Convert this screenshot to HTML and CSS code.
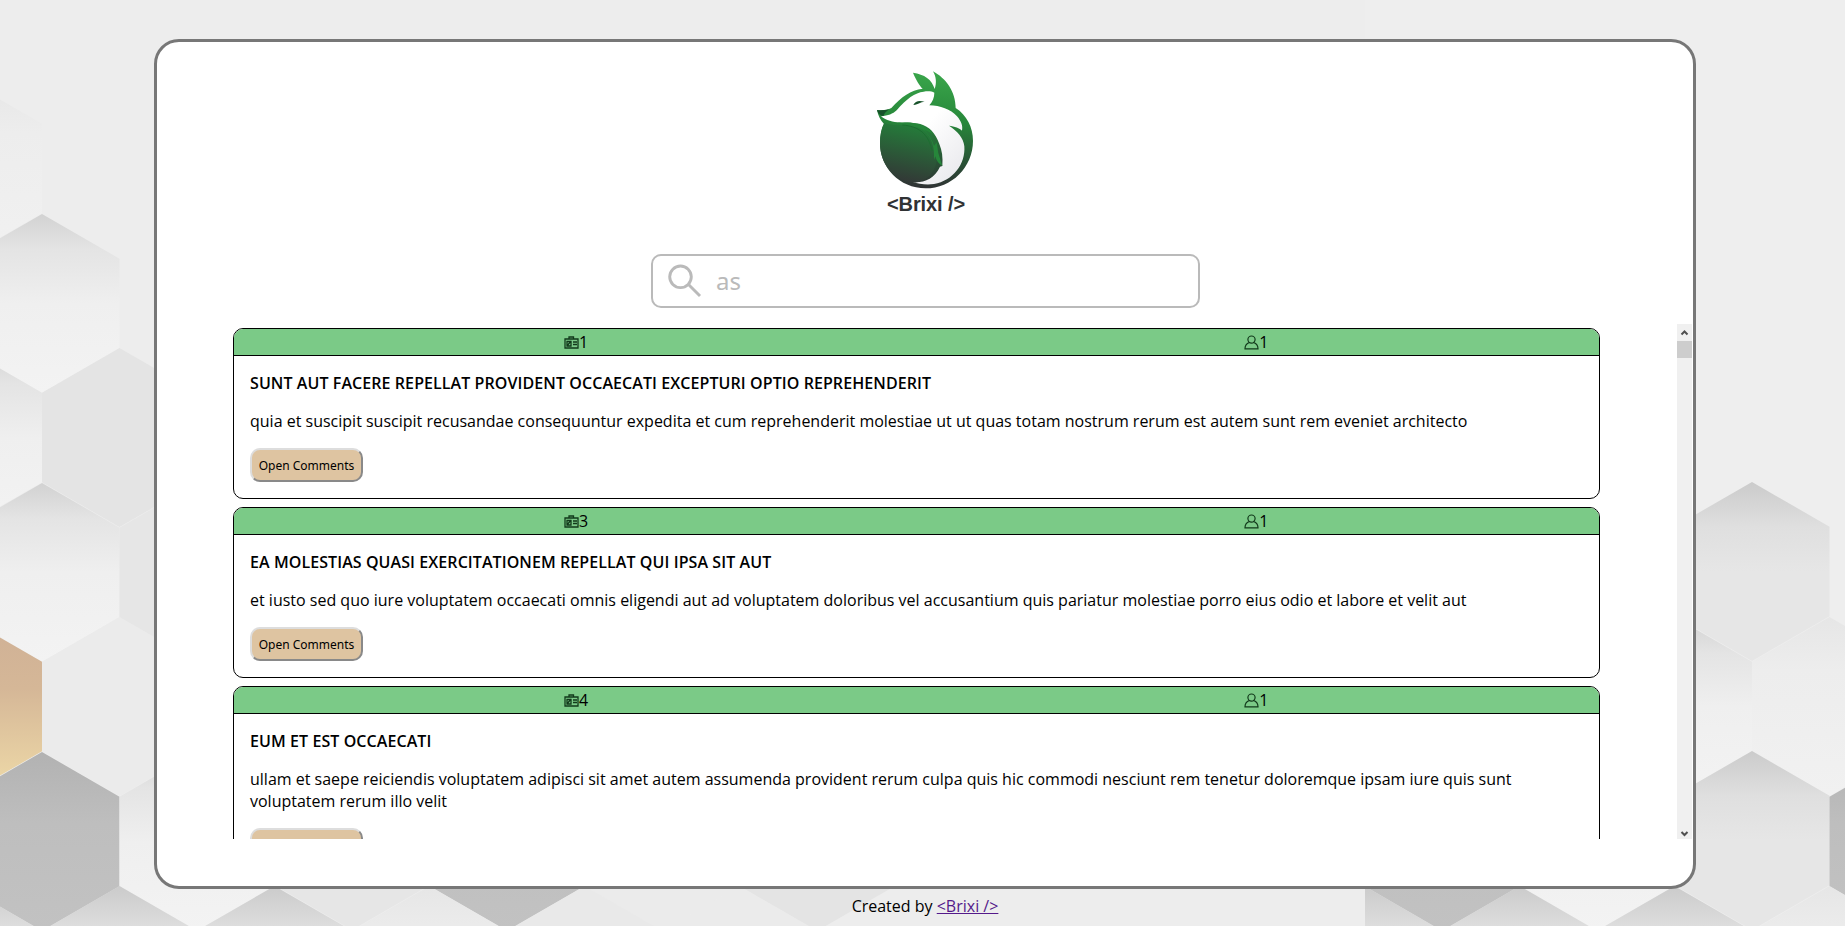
FILE: index.html
```html
<!DOCTYPE html>
<html lang="en">
<head>
<meta charset="utf-8">
<title>Brixi</title>
<link rel="stylesheet" href="styles.css">
</head>
<body>
<svg class="backdrop" viewBox="0 0 1845 926" aria-hidden="true">
  <defs>
    <linearGradient id="light" x1="0" y1="0" x2="0" y2="1"><stop offset="0" stop-color="#d2d2d2"/><stop offset=".2" stop-color="#e4e4e4"/><stop offset=".5" stop-color="#efefef"/><stop offset="1" stop-color="#f3f3f3"/></linearGradient>
    <linearGradient id="soft" x1="0" y1="0" x2="0" y2="1"><stop offset="0" stop-color="#e6e6e6"/><stop offset=".3" stop-color="#ededed"/><stop offset="1" stop-color="#f1f1f1"/></linearGradient>
    <linearGradient id="mid" x1="0" y1="0" x2="0" y2="1"><stop offset="0" stop-color="#cbcbcb"/><stop offset=".25" stop-color="#dfdfdf"/><stop offset=".5" stop-color="#e6e6e6"/><stop offset="1" stop-color="#e6e6e6"/></linearGradient>
    <linearGradient id="dark" x1="0" y1="0" x2="0" y2="1"><stop offset="0" stop-color="#b2b2b2"/><stop offset=".4" stop-color="#bebebe"/><stop offset="1" stop-color="#c2c2c2"/></linearGradient>
    <linearGradient id="gold" x1="0" y1="0" x2="0" y2="1"><stop offset="0" stop-color="#cfb096"/><stop offset=".4" stop-color="#d5b797"/><stop offset="1" stop-color="#f0dca9"/></linearGradient>
    <path id="hex" d="M0 0L77.5 44.7V134.3L0 179L-77.5 134.3V44.7Z"/>
    <g id="tile">
      <use href="#hex" x="-35.5" y="79" fill="url(#soft)"/>
      <use href="#hex" x="42" y="214" fill="url(#light)"/>
      <use href="#hex" x="-35.5" y="348" fill="url(#light)"/>
      <use href="#hex" x="119.5" y="348" fill="#e4e4e4"/>
      <use href="#hex" x="42" y="483" fill="url(#light)"/>
      <use href="#hex" x="197" y="483" fill="#e6e6e6"/>
      <use href="#hex" x="-35.5" y="617" fill="url(#gold)"/>
      <use href="#hex" x="119.5" y="617" fill="#ebebeb"/>
      <use href="#hex" x="42" y="752" fill="url(#dark)"/>
      <use href="#hex" x="197" y="752" fill="url(#light)"/>
      <use href="#hex" x="352" y="482" fill="url(#mid)"/>
      <use href="#hex" x="274.5" y="617" fill="url(#light)"/>
      <use href="#hex" x="429.5" y="617" fill="url(#soft)"/>
      <use href="#hex" x="352" y="751" fill="url(#mid)"/>
      <use href="#hex" x="507" y="752" fill="url(#dark)"/>
      <use href="#hex" x="662" y="752" fill="#ebebeb"/>
      <use href="#hex" x="817" y="752" fill="#e4e4e4"/>
      <use href="#hex" x="119.5" y="886" fill="url(#mid)"/>
      <use href="#hex" x="-35.5" y="886" fill="url(#mid)"/>
      <use href="#hex" x="274.5" y="886" fill="url(#mid)"/>
      <use href="#hex" x="429.5" y="886" fill="url(#soft)"/>
      <use href="#hex" x="584.5" y="886" fill="#e9e9e9"/>
      <use href="#hex" x="739.5" y="886" fill="#ebebeb"/>
    </g>
    <clipPath id="second"><rect x="1365" width="480" height="926"/></clipPath>
  </defs>
  <rect width="1845" height="926" fill="#ededed"/>
  <use href="#tile"/>
  <g clip-path="url(#second)"><rect x="1365" width="480" height="926" fill="#eee"/><use href="#tile" x="1400"/></g>
</svg>

<svg class="sprites" aria-hidden="true">
  <symbol id="badge" viewBox="0 0 15 14"><path d="M1 3.500H14V12.500H1ZM5 3.500V1.500H9.500V3.500M9 6.500H13M9 9H13M3 10.500L7 5.500M3 6H7V10.500H3Z" fill="none" stroke="#123a1b" stroke-width="1.300"/></symbol>
  <symbol id="person" viewBox="0 0 15 15"><path d="M7.500 1a3.500 3.500 0 0 1 0 7.200a3.500 3.500 0 0 1 0-7.200M5.300 7.500C2.500 8.500 1 10.500 1 13.800H14C14 10.500 12.500 8.500 9.700 7.500" fill="none" stroke="#123a1b" stroke-width="1.200"/></symbol>
</svg>

<main class="panel">
  <header class="brand">
    <svg class="logo" viewBox="45 30 300 366" role="img" aria-label="Wolf">
      <defs>
        <linearGradient id="fur" gradientUnits="userSpaceOnUse" x1="215" y1="40" x2="195" y2="387"><stop offset="0" stop-color="#3aa64b"/><stop offset=".42" stop-color="#27873a"/><stop offset=".75" stop-color="#285335"/><stop offset="1" stop-color="#303234"/></linearGradient>
        <linearGradient id="belly" gradientUnits="userSpaceOnUse" x1="170" y1="190" x2="130" y2="375"><stop offset="0" stop-color="#23813a"/><stop offset="1" stop-color="#333536"/></linearGradient>
        <linearGradient id="white" x1="0" y1="0" x2="1" y2="1"><stop offset=".45" stop-color="#fff"/><stop offset="1" stop-color="#e6e6ea"/></linearGradient>
      </defs>
      <path d="M219 37C258 58 287 98 287 147C320 168 339 205 339 245C339 325 275 388 197 388C118 388 60 325 60 253C60 230 64 210 72 195C62 184 54 170 51 153C68 155 82 153 94 147C125 113 152 93 188 89C178 79 167 61 159 41C193 46 216 61 224 90C230 72 229 54 219 37Z" fill="url(#fur)"/>
      <path d="M63 172C85 170 98 165 110 154C139 119 165 101 191 98C204 96 216 97 223 101C223 115 218 128 208 139C240 140 272 151 291 172C304 187 309 201 306 215C299 207 284 202 267 200C291 216 311 236 313 262C317 315 279 366 222 375C199 378 177 375 158 369C190 372 224 360 240 323L247 321C249 295 246 274 238 255C226 222 208 203 181 195C145 187 94 199 63 172Z" fill="url(#white)"/>
      <path d="M73 191C99 203 132 195 162 198C201 203 220 228 228 260C244 322 207 371 157 371C96 363 60 310 60 253C60 229 64 207 73 191Z" fill="url(#belly)"/>
      <path d="M111 194C148 185 181 193 199 207C210 212 215 216 218 225C209 219 200 214 192 212C207 226 217 243 222 260L230 250L235 282L247 321C233 312 229 302 226 292L222 303C226 250 203 207 162 204C149 200 131 201 111 194Z" fill="#26863a"/>
      <path d="M127 198C175 201 207 225 216 276" fill="none" stroke="#1c6e30" stroke-width="3"/>
      <path d="M160 138C166 124 181 124 194 129C180 129 177 136 160 138ZM51 153C63 155 76 153 88 151C79 158 73 162 70 171C59 170 54 163 51 153Z" fill="#17522a"/>
    </svg>
    <div class="brand-name">&lt;Brixi /&gt;</div>
  </header>

  <div class="search">
    <svg class="lens" viewBox="0 0 34 34"><path d="M12.500 2a10.800 10.800 0 0 1 0 21.600a10.800 10.800 0 0 1 0-21.600M20.500 20.500L32 32" fill="none" stroke="#bababa" stroke-width="2.900"/></svg>
    <span class="query">as</span>
  </div>

  <section class="results">
    <div class="posts">
      <article class="post">
        <div class="meta"><span class="tag"><svg class="icon"><use href="#badge"/></svg>1</span><span class="tag"><svg class="icon"><use href="#person"/></svg>1</span></div>
        <div class="content"><h2 class="title">sunt aut facere repellat provident occaecati excepturi optio reprehenderit</h2>
        <p class="text">quia et suscipit suscipit recusandae consequuntur expedita et cum reprehenderit molestiae ut ut quas totam nostrum rerum est autem sunt rem eveniet architecto</p>
        <button class="open">Open Comments</button></div>
      </article>
      <article class="post">
        <div class="meta"><span class="tag"><svg class="icon"><use href="#badge"/></svg>3</span><span class="tag"><svg class="icon"><use href="#person"/></svg>1</span></div>
        <div class="content"><h2 class="title">ea molestias quasi exercitationem repellat qui ipsa sit aut</h2>
        <p class="text">et iusto sed quo iure voluptatem occaecati omnis eligendi aut ad voluptatem doloribus vel accusantium quis pariatur molestiae porro eius odio et labore et velit aut</p>
        <button class="open">Open Comments</button></div>
      </article>
      <article class="post">
        <div class="meta"><span class="tag"><svg class="icon"><use href="#badge"/></svg>4</span><span class="tag"><svg class="icon"><use href="#person"/></svg>1</span></div>
        <div class="content"><h2 class="title">eum et est occaecati</h2>
        <p class="text">ullam et saepe reiciendis voluptatem adipisci sit amet autem assumenda provident rerum culpa quis hic commodi nesciunt rem tenetur doloremque ipsam iure quis sunt voluptatem rerum illo velit</p>
        <button class="open" aria-label="Open Comments"></button></div>
      </article>
    </div>
    <div class="scrollbar">
      <svg class="arrow" viewBox="0 0 15 17"><path d="M4.500 10.500L7.500 7.500L10.500 10.500" fill="none" stroke="#505050" stroke-width="2"/></svg>
      <div class="thumb"></div>
      <svg class="arrow arrow-down" viewBox="0 0 15 17"><path d="M4.500 10L7.500 13L10.500 10" fill="none" stroke="#505050" stroke-width="2"/></svg>
    </div>
  </section>
</main>
<footer class="footer">Created by <a class="credit" href="#">&lt;Brixi /&gt;</a></footer>
</body>
</html>
```
FILE: styles.css
```css
* { box-sizing: border-box; }
body {
  margin: 0;
  height: 926px;
  overflow: hidden;
  padding-top: 39px;
  font: 16px/22px "Open Sans", "Noto Sans", sans-serif;
  color: #000;
}
.backdrop { position: absolute; inset: 0; width: 1845px; height: 926px; z-index: -1; }
.sprites { position: absolute; width: 0; height: 0; }
.panel {
  width: 1542px;
  height: 850px;
  margin-left: 154px;
  background: #fff;
  border: 3px solid #777;
  border-radius: 25px;
  display: flex;
  flex-direction: column;
  align-items: center;
}
.brand { height: 212px; padding-top: 27px; display: flex; flex-direction: column; align-items: center; }
.logo { width: 100px; height: 122px; }
.brand-name { padding: 1px 0 0 2px; font: bold 20px/25px "Liberation Sans", Arial, sans-serif; letter-spacing: -0.1px; color: #303234; }
.search {
  width: 549px;
  height: 54px;
  margin-left: 1px;
  border: 2px solid #bababa;
  border-radius: 10px;
  display: flex;
  align-items: center;
  padding-left: 15px;
  gap: 14px;
}
.lens { width: 34px; height: 34px; }
.query { font: 24px/30px "Noto Sans", sans-serif; color: #bababa; }
.results { width: 100%; height: 515px; margin-top: 16px; padding-right: 1px; display: flex; justify-content: space-between; overflow: hidden; }
.posts { width: 1367px; margin-left: 76px; padding-top: 4px; display: flex; flex-direction: column; gap: 8px; }
.post { flex: none; border: 1px solid #000; border-radius: 10px; min-height: 171px; overflow: hidden; }
.meta { height: 27px; padding-left: 330px; display: flex; gap: 656px; align-items: center; background: #7bca87; border-bottom: 1px solid #000; }
.tag { display: flex; align-items: center; }
.icon { width: 15px; height: 15px; }
.content { padding: 16px; }
.title { margin: 0 0 16px; font-size: 16px; line-height: 22px; font-weight: 600; letter-spacing: 0.08px; text-transform: uppercase; }
.text { margin: 0 0 16px; }
.open {
  display: block;
  width: 113px;
  height: 34px;
  padding: 0;
  background: #dec4a1;
  border: 2px outset #ddd;
  border-radius: 10px;
  font: 12px "Noto Sans", sans-serif;
  color: #000;
}
.scrollbar { width: 15px; background: #f0f0f0; display: flex; flex-direction: column; }
.arrow { width: 15px; height: 17px; }
.thumb { height: 17px; background: #cdcdcd; }
.arrow-down { margin-top: auto; }
.footer { height: 22px; margin-top: 6px; padding-left: 5px; text-align: center; }
.credit { color: #551a8b; text-decoration: underline; }
```
